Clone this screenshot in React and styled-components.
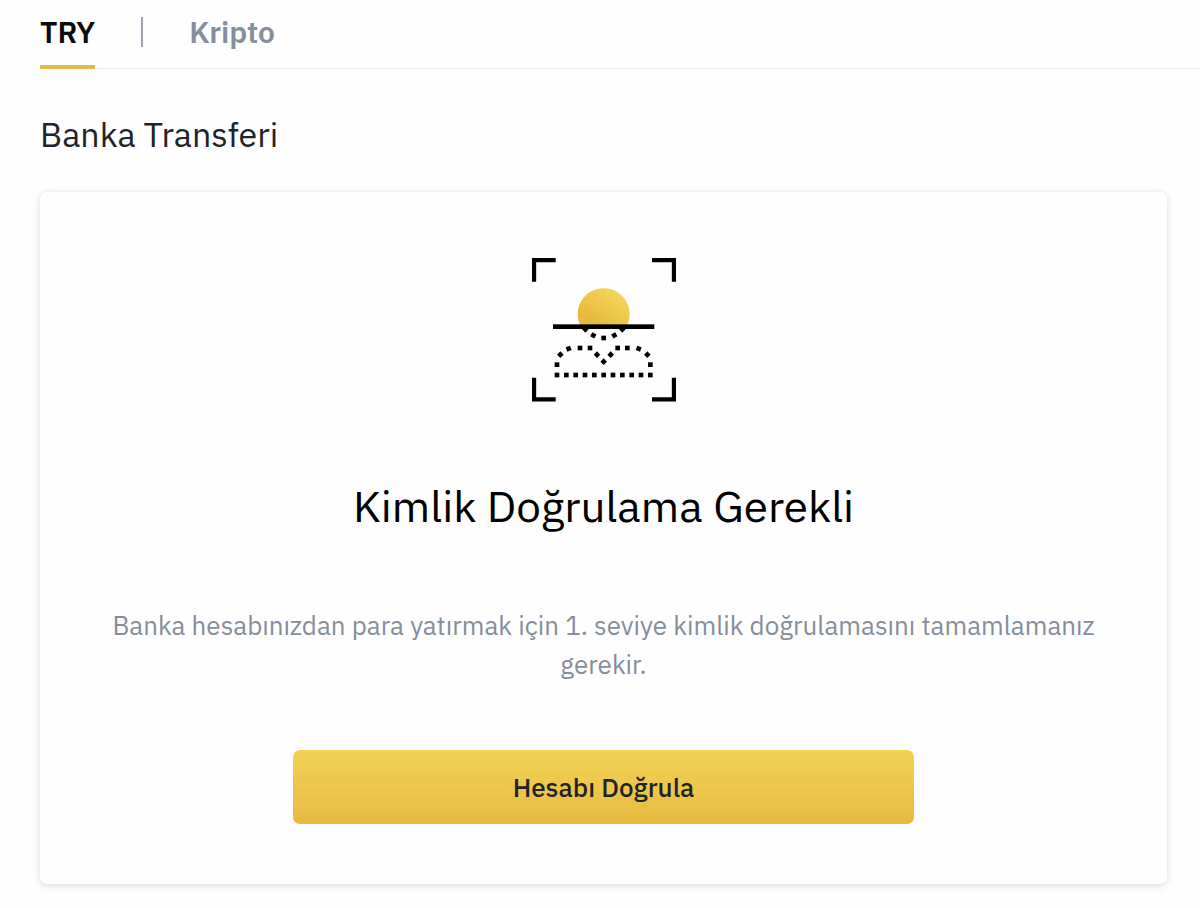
import React from "react";
import styled, { createGlobalStyle } from "styled-components";

const GlobalStyle = createGlobalStyle`
  *, *::before, *::after { box-sizing: border-box; }
  body {
    margin: 0;
    background: #fefefe;
    color: #1e2329;
    font-family: "IBM Plex Sans", Roboto, "Liberation Sans", sans-serif;
  }
`;

const Page = styled.div`
  padding-left: 40px;
`;

const Tabs = styled.nav`
  display: flex;
  align-items: stretch;
  gap: 46px;
  height: 69px;
  box-shadow: inset 0 -1px 0 #e6e8ea;
`;

const Tab = styled.a`
  display: flex;
  align-items: center;
  padding-bottom: 2px;
  border-bottom: 4px solid ${({ $active }) => ($active ? "#e3b94c" : "transparent")};
  color: ${({ $active }) => ($active ? "#0b0b0b" : "#848e9c")};
  font-size: 30px;
  font-weight: 600;
  line-height: 40px;
  text-decoration: none;
`;

const Divider = styled.span`
  align-self: flex-start;
  width: 2px;
  height: 30px;
  margin-top: 17px;
  background: #9ba3af;
`;

const Section = styled.main`
  padding: 43px 33px 24px 0;
`;

const SectionTitle = styled.h1`
  margin: 0 0 36px;
  font-size: 34px;
  font-weight: 400;
  line-height: 44px;
`;

const Card = styled.section`
  display: flex;
  flex-direction: column;
  align-items: center;
  padding: 66px 66px 60px;
  border-radius: 7px;
  background: #fefefe;
  box-shadow: 0 2px 8px rgba(20, 21, 26, 0.13), 0 0 4px rgba(20, 21, 26, 0.04);
  text-align: center;
`;

const Illustration = styled.svg`
  width: 144px;
  height: 144px;
`;

const CardTitle = styled.h2`
  margin: 76px 0 72px;
  color: #000000;
  font-size: 44px;
  font-weight: 400;
  line-height: 56px;
`;

const Message = styled.p`
  margin: 0 0 66px;
  color: #848e9c;
  font-size: 26px;
  line-height: 39px;
`;

const VerifyButton = styled.button`
  width: 62.5%;
  height: 74px;
  padding: 0 24px;
  border: 0;
  border-radius: 7px;
  background: linear-gradient(#f1d354, #e7ba41);
  color: #1e2329;
  font: inherit;
  font-size: 26px;
  font-weight: 500;
  cursor: pointer;
`;

/* x, y and rotation of each dot in the outline of the chin and shoulders */
const DOTS = [
  ...[75, 103, 131, 159, 187, 215, 243, 271, 299, 327, 355].map((x) => [x, 351, 0]),
  [75, 320, 0], [85, 290, 45], [110, 272, -20], [144, 270, 0], [174, 270, 0],
  [195, 290, 45], [215, 311, 45], [236, 290, 45],
  [257, 270, 0], [286, 270, 0], [320, 272, 20], [346, 290, 45], [355, 320, 0],
  [160, 214, 45], [184, 232, 30], [215, 240, 0], [247, 232, -30], [271, 214, 45],
];

function IdentityScan() {
  return (
    <Illustration viewBox="0 0 432 432" aria-hidden="true">
      <defs>
        <linearGradient id="head" x1="0.2" y1="0.8" x2="0.85" y2="0.1">
          <stop offset="0" stopColor="#e8b93e" />
          <stop offset="1" stopColor="#f3d857" />
        </linearGradient>
      </defs>
      <path
        d="M6 71V6H71M360 6H426V71M6 359V424H71M360 424H426V359"
        fill="none"
        stroke="#000"
        strokeWidth="13"
      />
      <path d="M146 205A78 78 0 1 1 284 205Z" fill="url(#head)" />
      {DOTS.map(([x, y, angle]) => (
        <rect
          key={`${x}-${y}`}
          x={x - 7}
          y={y - 7}
          width="14"
          height="14"
          transform={`rotate(${angle} ${x} ${y})`}
        />
      ))}
      <rect x="63" y="199" width="304" height="14" />
    </Illustration>
  );
}

export default function App() {
  return (
    <>
      <GlobalStyle />
      <Page lang="tr">
        <Tabs>
          <Tab href="#try" $active aria-current="page">TRY</Tab>
          <Divider />
          <Tab href="#kripto">Kripto</Tab>
        </Tabs>
        <Section>
          <SectionTitle>Banka Transferi</SectionTitle>
          <Card>
            <IdentityScan />
            <CardTitle>Kimlik Doğrulama Gerekli</CardTitle>
            <Message>
              Banka hesabınızdan para yatırmak için 1. seviye kimlik doğrulamasını tamamlamanız gerekir.
            </Message>
            <VerifyButton type="button">Hesabı Doğrula</VerifyButton>
          </Card>
        </Section>
      </Page>
    </>
  );
}
